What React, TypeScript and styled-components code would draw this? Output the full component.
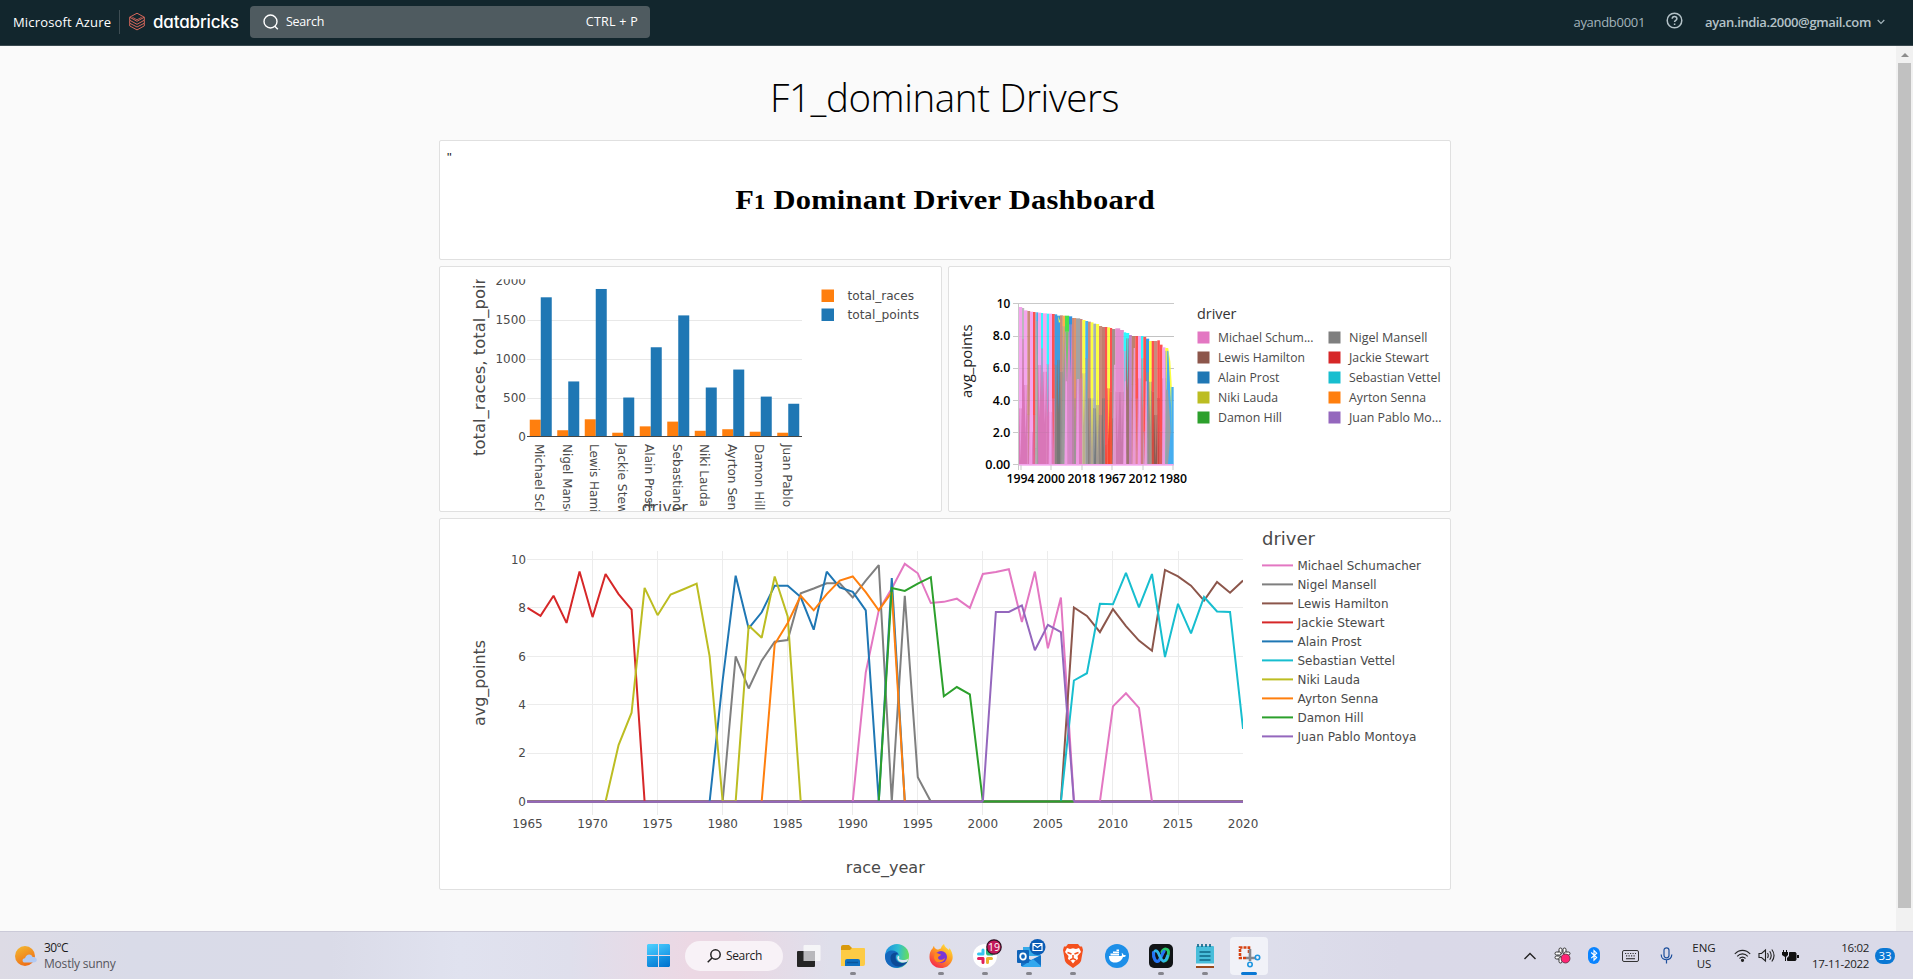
import React from "react";
import styled, { createGlobalStyle } from "styled-components";

const UI = `"Open Sans", "Noto Sans", sans-serif`;
const PLOT = `"DejaVu Sans", sans-serif`;

const GlobalStyle = createGlobalStyle`
  * { box-sizing: border-box; }
  html, body { margin: 0; padding: 0; }
  body { font-family: ${UI}; background: #fafafa; overflow: hidden; }
`;

const Screen = styled.div`
  display: flex;
  flex-direction: column;
  width: 1913px;
  height: 979px;
  overflow: hidden;
`;

/* ---------- top bar ---------- */

const TopBar = styled.header`
  display: flex;
  align-items: center;
  height: 46px;
  flex: none;
  padding: 0 28px 2px 13px;
  background: #12262d;
  border-bottom: 1px solid #3a4a50;
  white-space: nowrap;
`;

const Label = styled.span<{ $size?: number; $ls?: number; $w?: number; $color?: string; $weight?: number }>`
  display: block;
  flex: none;
  width: ${(p) => (p.$w ? `${p.$w}px` : "auto")};
  font-size: ${(p) => p.$size ?? 13}px;
  letter-spacing: ${(p) => p.$ls ?? 0}px;
  color: ${(p) => p.$color ?? "#fff"};
  font-weight: ${(p) => p.$weight ?? 400};
  white-space: nowrap;
`;

const Divider = styled.div`
  width: 1px;
  height: 24px;
  margin: 0 9px 0 7px;
  background: #3e4d53;
`;

const Wordmark = styled.span`
  width: 89px;
  margin-left: 8px;
  padding-top: 1px;
  font-family: Inter, sans-serif;
  font-feature-settings: "cv11";
  font-size: 17px;
  font-weight: 500;
  letter-spacing: -0.15px;
  color: #fff;
`;

const SearchBox = styled.div`
  display: flex;
  align-items: center;
  width: 400px;
  height: 32px;
  margin-left: 8px;
  padding: 0 12px 0 13px;
  border-radius: 4px;
  background: #4f5b60;
  justify-content: space-between;
`;

const SearchLead = styled.div`
  display: flex;
  align-items: center;
  gap: 7px;
`;

const Account = styled.div`
  display: flex;
  align-items: center;
  margin-left: auto;
`;

const HelpSlot = styled.div`
  display: flex;
  margin: 0 22px 2px 21px;
`;

const ChevronSlot = styled.div`
  display: flex;
  margin-left: 6px;
`;

/* ---------- dashboard ---------- */

const Body = styled.div`
  display: flex;
  height: 885px;
  flex: none;
`;

const Scroller = styled.main`
  flex: 1;
  padding: 20px 0 0 439px;
`;

const PageTitle = styled.h1`
  width: 1011px;
  height: 74px;
  margin: 0;
  padding-top: 2px;
  font-size: 38.5px;
  line-height: 58px;
  font-weight: 340;
  letter-spacing: -0.4px;
  text-align: center;
  color: #000;
`;

const Board = styled.div`
  display: grid;
  grid-template-columns: 503px 503px;
  grid-template-rows: 120px 246px 372px;
  gap: 6px;
`;

const Card = styled.section<{ $wide?: boolean }>`
  grid-column: ${(p) => (p.$wide ? "1 / -1" : "auto")};
  border: 1px solid #e0e0e0;
  border-radius: 2px;
  background: #fff;
  overflow: hidden;
`;

const Note = styled.div`
  height: 15px;
  padding: 8px 0 0 7px;
  font-family: "Liberation Sans", sans-serif;
  font-size: 13px;
  line-height: 18px;
  color: #222;
`;

const NoteHeading = styled.h2`
  margin: 26px 0 0;
  font-family: "Liberation Serif", serif;
  font-size: 27px;
  line-height: 36px;
  letter-spacing: 0.2px;
  text-align: center;
  color: #000;
  transform: scaleX(1.13);
`;

const OldStyle = styled.span`
  font-size: 20px;
`;

const Drawing = styled.svg`
  display: block;
  flex: none;
`;

const ScrollTrack = styled.div`
  display: flex;
  flex-direction: column;
  align-items: center;
  width: 17px;
  background: #f1f1f1;
`;

const ScrollArrow = styled.div`
  width: 0;
  height: 0;
  margin: 7px 0 6px;
  border: 4px solid transparent;
  border-top-width: 0;
  border-bottom: 4px solid #8c8c8c;
`;

const ScrollThumb = styled.div`
  width: 13px;
  height: 845px;
  background: #c1c1c1;
`;

/* ---------- taskbar ---------- */

const Taskbar = styled.footer`
  display: flex;
  align-items: center;
  height: 48px;
  flex: none;
  border-top: 1px solid #cbcad8;
  padding-right: 18px;
  background: linear-gradient(90deg, #dddbe5 0, #d9dbe8 130px, #dadbe8 330px, #e0e2ef 460px, #dfdfec 570px,
    #ecd8e4 690px, #ead8e4 735px, #dfdfeb 830px, #dedfec 1230px, #dad9e8 1400px, #dadae8 1913px);
`;

const Weather = styled.div`
  display: flex;
  align-items: center;
  width: 647px;
  padding-left: 15px;
  gap: 7px;
`;

const Stack = styled.div<{ $align?: string; $w?: number }>`
  display: flex;
  flex-direction: column;
  align-items: ${(p) => p.$align ?? "flex-start"};
  width: ${(p) => (p.$w ? `${p.$w}px` : "auto")};
  line-height: 16px;
`;

const SearchPill = styled.div`
  display: flex;
  align-items: center;
  gap: 5px;
  width: 98px;
  height: 30px;
  margin: 0 4px 0 15px;
  padding-left: 22px;
  border-radius: 15px;
  background: #f8f2f7;
`;

const AppSlot = styled.div<{ $active?: boolean }>`
  display: flex;
  flex-direction: column;
  align-items: center;
  width: 38px;
  height: 38px;
  margin: 0 3px;
  padding-top: 7px;
  border-radius: 4px;
  background: ${(p) => (p.$active ? "#f1f2f8" : "transparent")};
`;

const Indicator = styled.div<{ $kind: "none" | "dot" | "active" }>`
  width: ${(p) => (p.$kind === "active" ? 16 : 6)}px;
  height: 3px;
  margin-top: 4px;
  border-radius: 2px;
  background: ${(p) => (p.$kind === "none" ? "transparent" : p.$kind === "dot" ? "#85858d" : "#0a78d4")};
`;

const Tray = styled.div`
  display: flex;
  align-items: center;
  margin-left: auto;
`;

const TraySlot = styled.div<{ $w: number }>`
  display: flex;
  justify-content: center;
  width: ${(p) => p.$w}px;
`;

const Count = styled.div`
  width: 20px;
  height: 16px;
  margin-left: 6px;
  border-radius: 8px;
  background: #0a78d4;
  color: #fff;
  font-size: 11.5px;
  line-height: 16px;
  text-align: center;
`;

/* ---------- chart data ---------- */

const COLORS: Record<string, string> = {
  "Michael Schumacher": "#e377c2",
  "Nigel Mansell": "#7f7f7f",
  "Lewis Hamilton": "#8c564b",
  "Jackie Stewart": "#d62728",
  "Alain Prost": "#1f77b4",
  "Sebastian Vettel": "#17becf",
  "Niki Lauda": "#bcbd22",
  "Ayrton Senna": "#ff7f0e",
  "Damon Hill": "#2ca02c",
  "Juan Pablo Montoya": "#9467bd",
};

const NAMES = Object.keys(COLORS);
const NAME_WIDTHS = [123.5, 79, 91, 87, 64, 97.5, 62.5, 81, 66, 119];

const RACES = [223, 87, 228, 55, 137, 198, 80, 100, 68, 55];
const POINTS = [1798, 715, 1905, 508, 1155, 1565, 637, 868, 520, 428];

type Run = { name: string; start: number; values: number[] };

const RUNS: Run[] = [
  { name: "Michael Schumacher", start: 1990, values: [0, 5.33, 7.9, 8.8, 9.82, 9.43, 8.2, 8.25, 8.38, 8, 9.4, 9.48, 9.6, 7.42, 9.5, 6.33, 8.43, 0, 0, 0, 3.93, 4.47, 3.87, 0] },
  { name: "Nigel Mansell", start: 1980, values: [0, 6, 4.67, 5.82, 6.6, 6.67, 8.6, 8.8, 9.02, 9.02, 8.43, 9.13, 9.77, 0, 8.5, 1, 0] },
  { name: "Lewis Hamilton", start: 2006, values: [0, 8.02, 7.67, 7, 7.95, 7.25, 6.65, 6.23, 9.57, 9.3, 8.92, 8.3, 9.07, 8.63, 9.13] },
  { name: "Jackie Stewart", start: 1965, values: [8, 7.67, 8.5, 7.38, 9.5, 7.62, 9.4, 8.57, 7.93, 0] },
  { name: "Alain Prost", start: 1979, values: [0, 5, 9.33, 7.15, 7.82, 8.92, 8.92, 8.45, 7.1, 9.5, 8.85, 8.66, 7.9, 0, 9.23, 0] },
  { name: "Sebastian Vettel", start: 2006, values: [0, 5, 5.3, 8.17, 8.15, 9.45, 8.02, 9.4, 5.97, 8.17, 6.95, 8.45, 7.85, 7.83, 3] },
  { name: "Niki Lauda", start: 1971, values: [0, 2.33, 3.67, 8.83, 7.7, 8.55, 8.77, 9, 6, 0, 0, 7.27, 6.77, 9.3, 7.65, 0] },
  { name: "Ayrton Senna", start: 1983, values: [0, 6.5, 7.38, 8.5, 7.9, 8.57, 9.13, 9.3, 8.65, 7.9, 8.65, 0] },
  { name: "Damon Hill", start: 1992, values: [0, 8.82, 8.7, 9, 9.27, 4.35, 4.73, 4.43, 0, 0, 0, 0, 0, 0, 0, 0] },
  { name: "Juan Pablo Montoya", start: 2000, values: [0, 7.83, 7.83, 8.1, 6.25, 7.3, 7, 0] },
];

const PINK = "#f5a4ee";
const GRAY = "#a3a3a3";
const BROWN = "#c98a7c";
const RED = "#ff5050";
const BLUE = "#46aef0";
const CYAN = "#30f8ff";
const YEL = "#fbff40";
const ORANGE = "#ffb04d";
const ROSE = "#d976b8";
const DARK = "#8a8080";

/* left, right, top, upper colour, lower colour, height at which the lower colour takes over */
type Band = [number, number, number, string, string, number];
const BANDS: Band[] = [
  [27, 36, 27, PINK, ROSE, 330],
  [36, 42, 30, "#bcb8bc", ROSE, 122],
  [42, 52, 37, PINK, ROSE, 260],
  [52, 60, 39, BROWN, ROSE, 350],
  [60, 69, 41, PINK, "#e17ac0", 400],
  [69, 76, 42, RED, "#df6a9f", 350],
  [76, 79, 43, GRAY, GRAY, 450],
  [79, 84, 43, BLUE, GRAY, 68],
  [84, 93, 44, PINK, ROSE, 200],
  [93, 99, 45, CYAN, ROSE, 150],
  [99, 110, 46, PINK, ROSE, 220],
  [110, 117, 47, CYAN, ROSE, 198],
  [117, 126, 47, PINK, "#d879c0", 340],
  [126, 134, 48, RED, "#e078b0", 300],
  [134, 141, 49, "#3e9de0", DARK, 200],
  [141, 150, 53, "#3e9de0", "#777777", 185],
  [150, 158, 52, BROWN, "#888888", 220],
  [158, 165, 53, ORANGE, "#9b9b9b", 84],
  [165, 177, 53, "#48e04c", "#d688c4", 100],
  [177, 186, 55, "#3392e0", "#d285c8", 78],
  [186, 192, 60, BROWN, "#bb83a8", 180],
  [192, 198, 60, "#e0936a", "#9d9292", 300],
  [198, 210, 61, GRAY, "#d97cbc", 243],
  [210, 217, 63, BROWN, "#df7cb4", 240],
  [217, 226, 66, YEL, "#bbb08d", 225],
  [226, 234, 69, BLUE, "#999999", 180],
  [234, 242, 71, BROWN, "#88807d", 300],
  [242, 250, 73, YEL, "#b1a690", 300],
  [250, 258, 77, "#a7b0b4", "#777b7d", 330],
  [258, 267, 78, YEL, "#a0988c", 320],
  [267, 276, 84, BROWN, "#8f8683", 350],
  [276, 285, 87, "#c17c70", "#777171", 300],
  [285, 292, 87, RED, "#f34735", 440],
  [292, 300, 88, YEL, "#fa4530", 270],
  [300, 306, 90, RED, "#f05738", 280],
  [306, 316, 93, "#a68f89", "#a06d65", 360],
  [316, 330, 91, "#e48fd0", "#cf78b0", 280],
  [330, 341, 96, "#e48fcb", "#c979ad", 280],
  [341, 348, 103, CYAN, "#df8ecc", 158],
  [348, 357, 105, CYAN, "#9d7372", 120],
  [357, 365, 111, "#be87d0", "#cb80c0", 300],
  [365, 376, 114, "#bd8170", "#cb7886", 260],
  [376, 384, 114, RED, "#df829a", 300],
  [384, 393, 114, PINK, ROSE, 240],
  [393, 400, 114, CYAN, "#cf7a85", 180],
  [400, 408, 117, RED, "#c783a8", 400],
  [408, 417, 122, "#3b9be5", "#8f8e90", 222],
  [417, 425, 129, YEL, "#989480", 250],
  [425, 432, 129, RED, "#ce4c42", 280],
  [432, 442, 129, BROWN, "#8d5a52", 350],
  [442, 449, 127, RED, "#d04440", 300],
  [449, 457, 140, RED, "#d96065", 400],
  [457, 466, 148, PINK, ROSE, 240],
  [466, 474, 150, YEL, GRAY, 158],
];

const fx = (year: number) => 527.5 + (year - 1965) * 13.01;
const fy = (v: number) => 801.5 - v * 24.2;

type TProps = {
  x: number;
  y: number;
  w?: number;
  size?: number;
  children: string;
  anchor?: "start" | "middle" | "end";
  rotate?: number;
  fill?: string;
  font?: string;
  weight?: number;
};

function T({ x, y, w, size = 12, children, anchor = "start", rotate, fill = "#4a4a4a", font = PLOT, weight = 400 }: TProps) {
  return (
    <text
      x={x}
      y={y}
      fontSize={size}
      fontFamily={font}
      fontWeight={weight}
      fill={fill}
      textAnchor={anchor}
      textLength={w}
      lengthAdjust="spacingAndGlyphs"
      transform={rotate ? `rotate(${rotate} ${x} ${y})` : undefined}
    >
      {children}
    </text>
  );
}

function TotalsChart() {
  return (
    <Drawing width={501} height={244} viewBox="440 267 501 244">
      <clipPath id="totals">
        <rect x={440} y={279.3} width={501} height={231.7} />
      </clipPath>
      <g clipPath="url(#totals)">
        {[320, 359, 398].map((y) => (
          <rect key={y} x={527} y={y} width={275} height={1} fill="#e8e8e8" />
        ))}
        {RACES.map((r, i) => {
          const x = 529.75 + i * 27.5;
          return (
            <g key={i}>
              <rect x={x} y={437 - r * 0.0777} width={11} height={r * 0.0777} fill="#ff7f0e" />
              <rect x={x + 11} y={437 - POINTS[i] * 0.0777} width={11} height={POINTS[i] * 0.0777} fill="#1f77b4" />
            </g>
          );
        })}
        <rect x={527} y={436} width={275} height={1} fill="#444" />
        <T x={526} y={285} w={30.5} anchor="end">2000</T>
        <T x={526} y={324.2} w={30.5} anchor="end">1500</T>
        <T x={526} y={363} w={30.5} anchor="end">1000</T>
        <T x={526} y={402} w={23} anchor="end">500</T>
        <T x={526} y={441} anchor="end">0</T>
        {NAMES.map((n, i) => (
          <T key={n} x={535.4 + i * 27.5} y={444} rotate={90} w={NAME_WIDTHS[i] * 1.005}>
            {n}
          </T>
        ))}
        <T x={485} y={456} rotate={-90} size={16} w={197}>total_races, total_points</T>
        <T x={641.7} y={513} size={15.5} w={46}>driver</T>
      </g>
      <rect x={821.5} y={289.5} width={12.5} height={12.5} fill="#ff7f0e" />
      <rect x={821.5} y={308.5} width={12.5} height={12.5} fill="#1f77b4" />
      <T x={847.5} y={300} w={66.5}>total_races</T>
      <T x={847.5} y={319} w={71.5}>total_points</T>
    </Drawing>
  );
}

const LEGEND_LEFT: [string, string, number][] = [
  ["Michael Schum...", "#e377c2", 95.5],
  ["Lewis Hamilton", "#8c564b", 87],
  ["Alain Prost", "#1f77b4", 61.5],
  ["Niki Lauda", "#bcbd22", 60],
  ["Damon Hill", "#2ca02c", 64],
];
const LEGEND_RIGHT: [string, string, number][] = [
  ["Nigel Mansell", "#7f7f7f", 78.5],
  ["Jackie Stewart", "#d62728", 80],
  ["Sebastian Vettel", "#17becf", 91.5],
  ["Ayrton Senna", "#ff7f0e", 77],
  ["Juan Pablo Mo...", "#9467bd", 92.5],
];

function AreaChart() {
  return (
    <Drawing width={501} height={244} viewBox="949 267 501 244">
      {[303, 336, 368, 400, 432, 464].map((y) => (
        <rect key={y} x={1013} y={y} width={161} height={1} fill="#c9c9c9" />
      ))}
      <rect x={1018} y={303} width={1} height={167} fill="#c9c9c9" />
      <g transform="translate(1010 298) scale(0.33333)">
        {BANDS.map(([a, b, top, up, low, split]) => (
          <g key={a}>
            <rect x={a} y={split} width={b - a + 0.6} height={499 - split} fill={low} />
            <rect x={a} y={top} width={b - a + 0.6} height={split - top + 1} fill={up} />
            <path d={`M${a + (b - a) * 0.1} ${split}H${b - (b - a) * 0.1}L${a + (b - a) * 0.5} ${Math.min(498, split + 160)}Z`} fill={up} opacity={0.7} />
          </g>
        ))}
        {[62, 121, 168, 203, 313, 345, 372, 388, 408, 462].map((x, i) => (
          <path key={x} d={`M${x - 5} 499L${x - 1} ${i === 3 ? 243 : 150 + (i % 3) * 50}H${x + 3}L${x + 4} 499Z`} fill={PINK} opacity={0.75} />
        ))}
        {[82, 155, 195, 240, 262, 283, 421].map((x) => (
          <path key={x} d={`M${x - 2} 499L${x} 260L${x + 3} 499Z`} fill="#a2989c" opacity={0.6} />
        ))}
        <path d="M474 150L481 190L486 275V499H466Z" fill={YEL} />
        <path d="M472 158L475 160L484 340L488 499H466Z" fill={BLUE} />
        <path d="M468 275L474 276L482 400V499H466Z" fill="#98a0a8" />
        <rect x={484} y={267} width={7} height={232} fill={BLUE} />
        <path d="M144 53L150 70L147 76Z" fill={YEL} />
        <path d="M482 400L486 499H474Z" fill={BLUE} />
        <rect x={27} y={498} width={464} height={5} fill="#f2a5ec" />
        {[115, 211, 307, 403].map((y) => (
          <rect key={y} x={27} y={y} width={464} height={2} fill="#777" opacity={0.12} />
        ))}
      </g>
      {["1994", "2000", "2018", "1967", "2012", "1980"].map((t, i) => {
        const x = 1020.5 + i * 30.5;
        return (
          <g key={t}>
            <rect x={Math.round(x) - 0.5} y={465} width={1} height={5} fill="#c9c9c9" />
            <T x={x} y={482.6} w={28} anchor="middle" font={UI} weight={650} fill="#000">{t}</T>
          </g>
        );
      })}
      {(
        [["10", 307.7, 13.5], ["8.0", 340, 17.5], ["6.0", 372, 17.5], ["4.0", 404.5, 17.5], ["2.0", 436.5, 17.5], ["0.00", 468.5, 25]] as [string, number, number][]
      ).map(([t, y, w]) => (
        <T key={t} x={1010.3} y={y} w={w} anchor="end" font={UI} weight={650} fill="#000">{t}</T>
      ))}
      <T x={972} y={398} rotate={-90} w={73.5} size={14} font={UI} fill="#222" weight={450}>avg_points</T>
      <T x={1197} y={319} w={39.5} size={14.5} font={UI} fill="#333" weight={500}>driver</T>
      {[LEGEND_LEFT, LEGEND_RIGHT].map((col, c) =>
        col.map(([t, color, w], i) => (
          <g key={t}>
            <rect x={1197.5 + c * 131} y={331.5 + i * 20} width={12} height={12} fill={color} />
            <T x={1218 + c * 131} y={342.3 + i * 20} w={w} size={12.3} font={UI} fill="#4a4a4a">{t}</T>
          </g>
        ))
      )}
    </Drawing>
  );
}

function TrendChart() {
  return (
    <Drawing width={1010} height={370} viewBox="440 519 1010 370">
      <clipPath id="trend">
        <rect x={527} y={540} width={716} height={280} />
      </clipPath>
      {[2, 4, 6, 8, 10].map((v) => (
        <rect key={v} x={527} y={Math.floor(fy(v))} width={716} height={1} fill="#ececec" />
      ))}
      {[1970, 1975, 1980, 1985, 1990, 1995, 2000, 2005, 2010, 2015].map((v) => (
        <rect key={v} x={Math.floor(fx(v))} y={551} width={1} height={264} fill="#ececec" />
      ))}
      <rect x={527} y={800} width={716} height={3} fill="#8f7a78" />
      <g clipPath="url(#trend)" fill="none" strokeWidth={2} strokeLinejoin="miter" strokeMiterlimit={2}>
        {RUNS.map((run) => (
          <polyline
            key={run.name}
            stroke={COLORS[run.name]}
            points={run.values.map((v, i) => `${fx(run.start + i).toFixed(2)},${fy(v).toFixed(2)}`).join(" ")}
          />
        ))}
        <path d={`M527 801.8H${fx(2000)}M${fx(2007)} 801.8H1243`} stroke="#9467bd" />
      </g>
      {["0", "2", "4", "6", "8", "10"].map((t, i) => (
        <T key={t} x={526} y={fy(i * 2) + 4.2} anchor="end" w={t === "10" ? 15 : undefined}>{t}</T>
      ))}
      {Array.from({ length: 12 }, (_, i) => 1965 + i * 5).map((year) => (
        <T key={year} x={fx(year)} y={827.6} w={30.5} anchor="middle">{String(year)}</T>
      ))}
      <T x={485} y={726} rotate={-90} size={16} w={86}>avg_points</T>
      <T x={845.8} y={872.5} size={16} w={79}>race_year</T>
      <T x={1262} y={544.6} size={17.5} w={53}>driver</T>
      {NAMES.map((n, i) => (
        <g key={n}>
          <rect x={1262} y={564.4 + i * 19} width={31} height={2} fill={COLORS[n]} />
          <T x={1297.5} y={570 + i * 19} w={NAME_WIDTHS[i]}>{n}</T>
        </g>
      ))}
    </Drawing>
  );
}

/* ---------- icons ---------- */

const BrickLogo = () => (
  <Drawing width={16} height={19} viewBox="0 0 16 19" fill="none" stroke="#d9685c" strokeWidth={1}>
    <path d="M.7 5.2L8 1.2l7.3 4L8 9.3z" />
    <path d="M.7 5.2v3L8 12.3l7.3-4.1v-3M.7 8.2v3L8 15l7.3-3.8v-3M.7 11.2v2.7L8 17.9l7.3-4v-2.7" />
    <path d="M3.4 5.3L8 7.8l4.6-2.5" strokeWidth={0.8} />
  </Drawing>
);

const HeaderSearch = () => (
  <Drawing width={16} height={16} viewBox="0 0 16 16" fill="none" stroke="#fff" strokeWidth={1.4}>
    <circle cx={7.5} cy={7.5} r={6.5} />
    <path d="M11.8 12.2l3 3" />
  </Drawing>
);

const Help = () => (
  <Drawing width={17} height={17} viewBox="0 0 17 17" fill="none" stroke="#b4c2c8" strokeWidth={1.5}>
    <circle cx={8.5} cy={8.5} r={7.3} />
    <path d="M6.2 6.7c0-3 4.7-3 4.7 0 0 1.6-2.3 1.6-2.3 3.2M8.6 11.5v1.6" />
  </Drawing>
);

const icon = { width: 24, height: 24, viewBox: "0 0 24 24" };

const WinStart = () => (
  <Drawing width={23} height={23} viewBox="0 0 23 23">
    <defs>
      <linearGradient id="win" x1="0" y1="0" x2="1" y2="1" gradientUnits="objectBoundingBox">
        <stop offset="0" stopColor="#4fd2ff" />
        <stop offset="1" stopColor="#1e9ae8" />
      </linearGradient>
      <linearGradient id="win2" x1="0" y1="0" x2="1" y2="1">
        <stop offset="0" stopColor="#22a6ee" />
        <stop offset="1" stopColor="#0070cc" />
      </linearGradient>
    </defs>
    <path d="M1 0h10v11H0V1zM12 0h10l1 1v10H12z" fill="url(#win)" />
    <path d="M0 12h11v11H1l-1-1zM12 12h11v10l-1 1H12z" fill="url(#win2)" />
  </Drawing>
);

const TaskView = () => (
  <Drawing {...icon}>
    <rect x={6.5} y={1} width={17} height={16} rx={1} fill="#f5f5f7" />
    <rect x={0} y={7} width={18} height={16} rx={1} fill="#252525" />
    <path d="M6.5 7H18v10H6.5z" fill="#b9b9bc" />
  </Drawing>
);

const Folder = () => (
  <Drawing {...icon}>
    <path d="M0 3q0-2 2-2h6l3 3v6H0z" fill="#d99a0c" />
    <path d="M0 6h9l2-2h12q1 0 1 1v15q0 2-2 2H0z" fill="#fdcb45" />
    <path d="M4 22v-5q0-2 2-2h11q2 0 2 2v5z" fill="#0f6fc0" />
    <path d="M6 18.5h11" stroke="#0a559c" strokeWidth={1.5} />
  </Drawing>
);

const Edge = () => (
  <Drawing {...icon}>
    <defs>
      <linearGradient id="edgeTop" x1="0" y1="0.3" x2="1" y2="0.4">
        <stop offset="0" stopColor="#1c8fe0" />
        <stop offset="0.55" stopColor="#30bfd0" />
        <stop offset="1" stopColor="#6ade58" />
      </linearGradient>
    </defs>
    <circle cx={12} cy={12} r={12} fill="url(#edgeTop)" />
    <path d="M0 12C1 5 12 4.500 14 11c-3-1-4 2-2 5 2 3.500 7 3.500 10.500 1.500C17 27 0 26 0 12z" fill="#1567bd" />
    <path d="M5.500 14c0-5 4-6 7.500-5-4 2-3.500 8 1 9.500 3 1 6 .3 8.500-1C18 24.500 6 24.500 5.500 14z" fill="#0c4a96" />
    <path d="M12.300 13.500c0-2 3.200-2.500 1.700 1.500 3 2 7 1 9.300-.5l-1 3c-4 2.500-10 .5-10-4z" fill="#dfe6f2" />
  </Drawing>
);

const Firefox = () => (
  <Drawing {...icon}>
    <defs>
      <linearGradient id="fox" x1="0.9" y1="0" x2="0.2" y2="1">
        <stop offset="0" stopColor="#fff045" />
        <stop offset="0.45" stopColor="#ff9a20" />
        <stop offset="1" stopColor="#f5214e" />
      </linearGradient>
    </defs>
    <path d="M3 5c1-.5 1-2.500 2-3 .2 2 1.500 2.500 3 3.500 2 0 2-.5 4-1C12 2 14 1 15 0c.5 3 3 4 5 6l.5-2c3 4 4 9 2.500 12.500C21 21.500 17 24 12 24 5 24 .5 19 .5 13 .5 9 1.500 7 3 5z" fill="url(#fox)" />
    <circle cx={12} cy={13} r={6} fill="#7a35d6" />
    <path d="M6 9c3-.5 4 1 6 1.500-.5 1.500-2.500 1.500-3 3C9 16 13 17 16 14c-1 6-11 6-11-1z" fill="#ff8a1c" />
  </Drawing>
);

const Slack = () => (
  <Drawing width={30} height={24} viewBox="-3 0 30 24" overflow="visible">
    <circle cx={12} cy={12} r={12} fill="#fff" />
    <g strokeWidth={3} strokeLinecap="round">
      <path d="M10 6v4M5.500 10h4" stroke="#36c5f0" />
      <path d="M14.500 5.500v4M15 10h4" stroke="#2eb67d" />
      <path d="M14.500 14.500v4M14.500 14.500h4" stroke="#ecb22e" />
      <path d="M10 14.500v4M5.500 14.500h4" stroke="#e01e5a" />
    </g>
    <circle cx={21} cy={3} r={7.200} fill="#c2185b" stroke="#2b1020" strokeWidth={1.200} />
    <text x={21} y={6.700} fontSize={10.500} fontFamily="Open Sans" fill="#fff" textAnchor="middle">19</text>
  </Drawing>
);

const Outlook = () => (
  <Drawing width={30} height={24} viewBox="-3 0 30 24" overflow="visible">
    <path d="M6 3h17v9H6z" fill="#35a9e8" />
    <path d="M4 11l10 5 10-5v11H4z" fill="#1272c8" />
    <path d="M4 23l12-8 8 7v1z" fill="#33a8ee" />
    <rect x={0} y={6} width={12} height={13} rx={1} fill="#0f63b8" />
    <ellipse cx={6} cy={12.500} rx={2.800} ry={3.200} fill="none" stroke="#fff" strokeWidth={1.800} />
    <circle cx={20.500} cy={3} r={8} fill="#0b5cb5" />
    <path d="M16 -.5h9v7h-9zM16 0l4.500 3.500L25 0" fill="none" stroke="#fff" strokeWidth={1.200} />
  </Drawing>
);

const Brave = () => (
  <Drawing {...icon}>
    <path d="M7 0h10l2 2.500h2L22 6l-2 11q-1 2-3 3.500L12 24l-5-3.500Q5 19 4 17L2 6l1-3.500h2z" fill="#f4511e" />
    <path d="M6 4l3 1 3-.7L15 5l3-1 2 4-3.500 4 .5 3-3 2-2 2.500L10 17l-3-2 .5-3L4 8z" fill="#fff" />
    <path d="M6.500 8.500l4 1.500M17.500 8.500l-4 1.500M12 11v3M9 16l3-1.500 3 1.500" stroke="#f4511e" strokeWidth={1.500} fill="none" />
  </Drawing>
);

const Docker = () => (
  <Drawing {...icon}>
    <circle cx={12} cy={12} r={12} fill="#1d8fe8" />
    <path d="M4 12h12.500c.8-1 .5-2.500 0-3.300 1.200.4 1.900 1.300 2 2.300 1-.2 1.900 0 2.500.5-.5 1.200-1.800 1.600-3 1.500C16.500 17 13.500 18.500 10 18.500 5.500 18.500 4 16 4 12zM5.500 9.500H14v2H5.500zM8 7.500h6v1.500H8zM11.500 5.500H14V7h-2.500z" fill="#fff" />
  </Drawing>
);

const Webex = () => (
  <Drawing {...icon} fill="none" strokeLinecap="round">
    <rect width={24} height={24} rx={5} fill="#111416" />
    <path d="M13 8c2-4 7-4 6.500 1-.3 4-2 8-4.500 8" stroke="#28c76a" strokeWidth={3} />
    <path d="M4.500 8.500C4 14 7 19 9.500 17S13 9 15 7.500" stroke="#2475f5" strokeWidth={3.200} />
    <path d="M6 7c4-2 5 11 9 10 2-.5 3-3 3.500-5" stroke="#30b6e8" strokeWidth={2.800} />
  </Drawing>
);

const Notepad = () => (
  <Drawing {...icon}>
    <path d="M3 3q0-1 1-1h16q1 0 1 1v18H3z" fill="#48bdda" />
    <path d="M5 0v3M9 0v3M13 0v3M17 0v3" stroke="#14688a" strokeWidth={1.700} />
    <path d="M6.500 8h11M6.500 12h11M6.500 16h11" stroke="#0e6685" strokeWidth={1.700} />
    <path d="M3 19.500h18V22H3z" fill="#f5f5f5" />
    <path d="M3 22h18v2H3z" fill="#9c4a1c" />
  </Drawing>
);

const Snip = () => (
  <Drawing {...icon} fill="none">
    <path d="M9 14H3V3.500H12V9" stroke="#d6410f" strokeWidth={2.600} strokeDasharray="3 1" />
    <path d="M13 5v12M9 14h10" stroke="#84868c" strokeWidth={2.600} />
    <circle cx={20.500} cy={13.500} r={2.200} stroke="#1e96e0" strokeWidth={1.600} />
    <circle cx={13} cy={20.500} r={2.200} stroke="#1e96e0" strokeWidth={1.600} />
  </Drawing>
);

const APPS: [React.FC, "none" | "dot" | "active"][] = [
  [TaskView, "none"],
  [Folder, "dot"],
  [Edge, "none"],
  [Firefox, "dot"],
  [Slack, "dot"],
  [Outlook, "dot"],
  [Brave, "dot"],
  [Docker, "none"],
  [Webex, "dot"],
  [Notepad, "dot"],
  [Snip, "active"],
];

const TrayChevron = () => (
  <Drawing width={14} height={8} viewBox="0 0 14 8" fill="none" stroke="#222" strokeWidth={1.400}>
    <path d="M1.500 7L7 1.500 12.500 7" />
  </Drawing>
);

const TraySlack = () => (
  <Drawing width={17} height={17} viewBox="0 0 17 17">
    <g fill="#fff" stroke="#333" strokeWidth={1}>
      <rect x={5} y={1} width={3} height={6} rx={1.500} />
      <rect x={1} y={5} width={6} height={3} rx={1.500} />
      <rect x={9} y={1} width={3} height={6} rx={1.500} />
      <rect x={10} y={5} width={6} height={3} rx={1.500} />
      <rect x={1} y={9} width={6} height={3} rx={1.500} />
      <rect x={5} y={10} width={3} height={6} rx={1.500} />
    </g>
    <circle cx={11.500} cy={11.500} r={4.500} fill="#ff2474" stroke="#5a3040" strokeWidth={0.800} />
  </Drawing>
);

const Bluetooth = () => (
  <Drawing width={12} height={17} viewBox="0 0 12 17">
    <rect width={12} height={17} rx={6} fill="#0a84ff" />
    <path d="M3.200 5.500l5.500 5-2.700 2.700V3.500l2.700 2.700-5.500 5" fill="none" stroke="#fff" strokeWidth={1.100} />
  </Drawing>
);

const Keyboard = () => (
  <Drawing width={17} height={12} viewBox="0 0 17 12" fill="none" stroke="#333">
    <rect x={0.500} y={0.500} width={16} height={11} rx={1.500} />
    <path d="M3 3.500h11M4 5.800h10" strokeDasharray="1.200 1.300" strokeWidth={1.200} />
    <path d="M4 8.700h9" strokeWidth={1.100} />
  </Drawing>
);

const Mic = () => (
  <Drawing width={13} height={17} viewBox="0 0 13 17" fill="none" stroke="#1d4f9c" strokeWidth={1.200}>
    <rect x={4} y={0.800} width={5} height={10} rx={2.500} />
    <path d="M1.200 7.500c0 7 10.600 7 10.600 0M6.500 13v3.500" />
  </Drawing>
);

const Wifi = () => (
  <Drawing width={17} height={13} viewBox="0 0 17 13" fill="none" stroke="#222" strokeWidth={1.100}>
    <path d="M.8 5C5 .2 12 .2 16.200 5M3.200 7.300c3-3.200 7.600-3.200 10.600 0M5.500 9.500c1.800-1.800 4.200-1.800 6 0" />
    <circle cx={8.500} cy={11.300} r={1.100} fill="#222" />
  </Drawing>
);

const Volume = () => (
  <Drawing width={17} height={15} viewBox="0 0 17 15" fill="none" stroke="#222" strokeWidth={1.100}>
    <path d="M1 5.500h2.500L7.500 2v11L3.500 9.500H1z" />
    <path d="M9.500 5q1.500 2.500 0 5M11.700 3.300q3 4.200 0 8.400M13.800 1.500q4.500 6 0 12" />
  </Drawing>
);

const Battery = () => (
  <Drawing width={17} height={14} viewBox="0 0 17 14">
    <path d="M1 1h1v2h2V1h1v2h1v3L4 8v4H3V8L0 6V3h1z" fill="#111" />
    <path d="M7.500 3.500H13q1 0 1 1v6q0 1-1 1H5.500V9l2-2z" fill="#111" stroke="#111" />
    <rect x={15} y={6} width={2} height={3} fill="#111" />
  </Drawing>
);

export default function App() {
  return (
    <Screen>
      <GlobalStyle />
      <TopBar>
        <Label $w={99} $size={13} $ls={0.17}>Microsoft Azure</Label>
        <Divider />
        <BrickLogo />
        <Wordmark>databricks</Wordmark>
        <SearchBox>
          <SearchLead>
            <HeaderSearch />
            <Label $size={12.5} $ls={-0.25}>Search</Label>
          </SearchLead>
          <Label $size={12.5} $ls={0.25}>CTRL + P</Label>
        </SearchBox>
        <Account>
          <Label $size={13} $color="#a3b4bb" $ls={-0.3}>ayandb0001</Label>
          <HelpSlot>
            <Help />
          </HelpSlot>
          <Label $size={13} $color="#b4c2c8" $weight={600} $ls={-0.35}>ayan.india.2000@gmail.com</Label>
          <ChevronSlot>
            <Drawing width={8} height={6} viewBox="0 0 8 6" fill="none" stroke="#a3b4bb" strokeWidth={1.200}>
              <path d="M.7 1L4 4.300 7.300 1" />
            </Drawing>
          </ChevronSlot>
        </Account>
      </TopBar>

      <Body>
        <Scroller>
          <PageTitle>F1_dominant Drivers</PageTitle>
          <Board>
            <Card $wide>
              <Note>"</Note>
              <NoteHeading>
                F<OldStyle>1</OldStyle> Dominant Driver Dashboard
              </NoteHeading>
            </Card>
            <Card>
              <TotalsChart />
            </Card>
            <Card>
              <AreaChart />
            </Card>
            <Card $wide>
              <TrendChart />
            </Card>
          </Board>
        </Scroller>
        <ScrollTrack>
          <ScrollArrow />
          <ScrollThumb />
        </ScrollTrack>
      </Body>

      <Taskbar>
        <Weather>
          <Drawing width={22} height={20} viewBox="0 0 22 20">
            <defs>
              <linearGradient id="sun" x1="0.2" y1="0" x2="0.7" y2="1">
                <stop offset="0" stopColor="#f3b62f" />
                <stop offset="1" stopColor="#ee6a16" />
              </linearGradient>
            </defs>
            <circle cx={10} cy={10} r={10} fill="url(#sun)" />
            <path d="M10 16.500c-3.500 0-3-4.500 0-4.200 1-5 7-5 7.500-1.200 5-.8 6 5.400 1 5.400z" fill="#b3cbf4" />
          </Drawing>
          <Stack>
            <Label $size={12} $ls={-0.6} $color="#1a1a1a">30°C</Label>
            <Label $size={12} $ls={-0.2} $color="#55555c">Mostly sunny</Label>
          </Stack>
        </Weather>
        <WinStart />
        <SearchPill>
          <Drawing width={14} height={14} viewBox="0 0 14 14" fill="none" stroke="#222" strokeWidth={1.500}>
            <circle cx={8.500} cy={5.500} r={4.700} />
            <path d="M5 9l-4.300 4.300" />
          </Drawing>
          <Label $size={12} $ls={-0.35} $color="#1c1c1c">Search</Label>
        </SearchPill>
        {APPS.map(([Icon, kind], i) => (
          <AppSlot key={i} $active={kind === "active"}>
            <Icon />
            <Indicator $kind={kind} />
          </AppSlot>
        ))}
        <Tray>
          <TraySlot $w={32}><TrayChevron /></TraySlot>
          <TraySlot $w={32}><TraySlack /></TraySlot>
          <TraySlot $w={32}><Bluetooth /></TraySlot>
          <TraySlot $w={40}><Keyboard /></TraySlot>
          <TraySlot $w={32}><Mic /></TraySlot>
          <Stack $align="center" $w={44}>
            <Label $size={11.500} $color="#222">ENG</Label>
            <Label $size={11.500} $color="#222">US</Label>
          </Stack>
          <TraySlot $w={32}><Wifi /></TraySlot>
          <TraySlot $w={16}><Volume /></TraySlot>
          <TraySlot $w={32}><Battery /></TraySlot>
          <Stack $align="flex-end" $w={63}>
            <Label $size={11.500} $ls={-0.3} $color="#222">16:02</Label>
            <Label $size={11.500} $ls={-0.3} $color="#222">17-11-2022</Label>
          </Stack>
          <Count>33</Count>
        </Tray>
      </Taskbar>
    </Screen>
  );
}
